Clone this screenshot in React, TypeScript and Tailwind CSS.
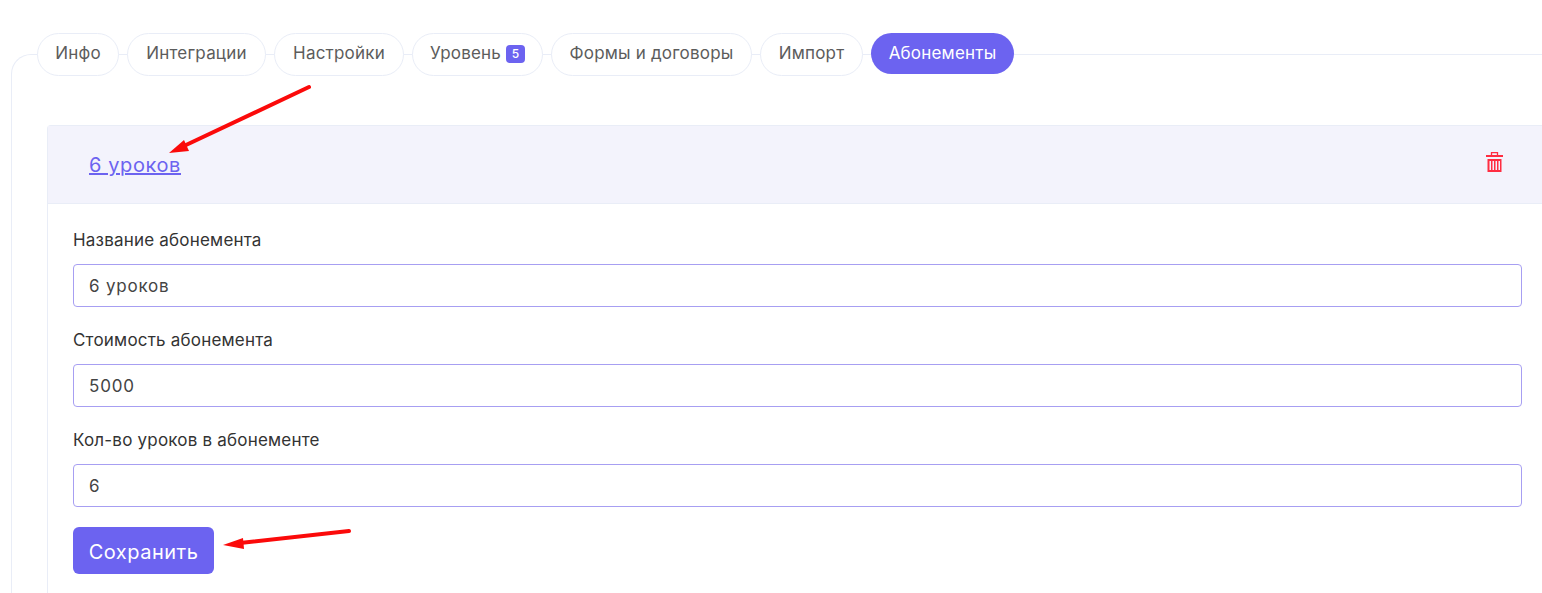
const tabs = [
  { label: 'Инфо', width: 'w-[82px]' },
  { label: 'Интеграции', width: 'w-[139px]' },
  { label: 'Настройки', width: 'w-[130px]' },
  { label: 'Уровень', width: 'w-[131px]', badge: '5' },
  { label: 'Формы и договоры', width: 'w-[201px]' },
  { label: 'Импорт', width: 'w-[103px]' },
];

const fields = [
  { label: 'Название абонемента', value: '6 уроков' },
  { label: 'Стоимость абонемента', value: '5000' },
  { label: 'Кол-во уроков в абонементе', value: '6' },
];

const TrashIcon = () => (
  <svg width="17" height="20" viewBox="0 0 17 20" fill="none">
    <path d="M5.5 3V.7h6V3" stroke="#ff2d41" strokeWidth="1.3" />
    <rect x="0" y="3" width="17" height="2" fill="#ff2d41" />
    <path
      fillRule="evenodd"
      clipRule="evenodd"
      d="M1.5 7h14v13h-14zM3.5 9v9h1.5V9zM6.5 9v9H8V9zM9.5 9v9H11V9zM12.5 9v9H14V9z"
      fill="#ff2d41"
    />
  </svg>
);

export default function App() {
  return (
    <div className="relative h-[593px] w-[1542px] overflow-hidden bg-white pt-[54px] font-['Inter',sans-serif] text-[17px] tracking-[0.2px]">
      <div className="ml-[11px] h-[600px] w-[1600px] rounded-tl-[20px] border-l border-t border-[#e9edf7]">
        <div className="-mt-[22px] ml-[25px] flex items-start gap-2">
          {tabs.map(({ label, width, badge }) => (
            <div
              key={label}
              className={`flex h-[43px] items-center justify-center gap-[5px] rounded-full border border-[#e9edf7] bg-white pb-0.5 text-[#5c5c5c] ${width}`}
            >
              {label}
              {badge && (
                <span className="flex h-[18px] w-[19px] items-center justify-center rounded-[4px] bg-[#6c63f0] text-xs font-medium text-white">
                  {badge}
                </span>
              )}
            </div>
          ))}
          <div className="flex h-[41px] w-[143px] items-center justify-center rounded-full bg-[#6c63f0] text-white">
            Абонементы
          </div>
        </div>

        <div className="ml-[35px] mt-[49px] w-[1501px] rounded-t-[4px] border-x border-t border-[#e9edf7]">
          <div className="flex h-[78px] items-start justify-between border-b border-[#e9edf7] bg-[#f3f3fc] pl-[41px] pr-[44px]">
            <a href="#" className="mt-[27px] text-[20px] leading-6 tracking-[0.6px] text-[#6c63f0] underline">
              6 уроков
            </a>
            <span className="mt-[26px]">
              <TrashIcon />
            </span>
          </div>

          <div className="px-[25px] pb-10 pt-6">
            {fields.map(({ label, value }) => (
              <div key={label} className="mb-[21px]">
                <label className="mb-3 block leading-6 text-[#333333]">{label}</label>
                <div className="flex h-[43px] items-center rounded-[4px] border border-[#a79ff2] px-[15px] pt-0.5 tracking-[0.8px] text-[#444444]">
                  {value}
                </div>
              </div>
            ))}
            <button className="-mt-px flex h-[47px] w-[141px] items-center justify-center rounded-md bg-[#6c63f0] pt-0.5 text-[20px] tracking-[0.5px] text-white">
              Сохранить
            </button>
          </div>
        </div>
      </div>

      <svg className="absolute left-0 top-0" width="1542" height="593" fill="none">
        <path d="M309 87L186 145" stroke="#fb0a0a" strokeWidth="4" strokeLinecap="round" />
        <path d="M169 153L184 140L189 151Z" fill="#fb0a0a" />
        <path d="M349 531L240 543" stroke="#fb0a0a" strokeWidth="4" strokeLinecap="round" />
        <path d="M223 545L243 538L244 549Z" fill="#fb0a0a" />
      </svg>
    </div>
  );
}
